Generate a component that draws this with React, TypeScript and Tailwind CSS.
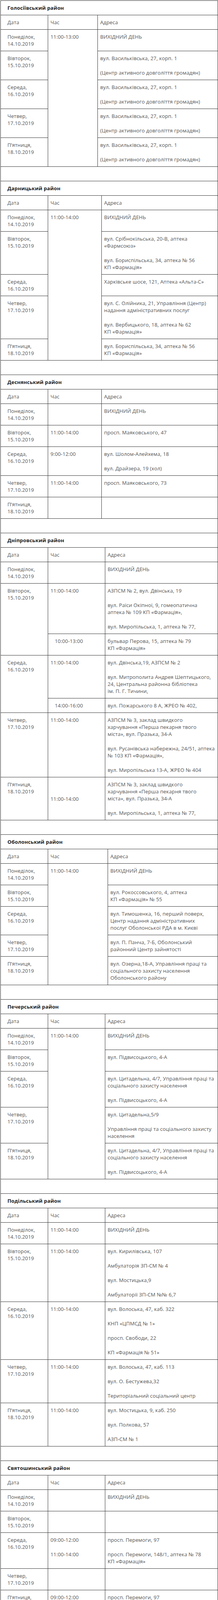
import React from "react";

const DAYS = [
  "Понеділок,\n14.10.2019",
  "Вівторок,\n15.10.2019",
  "Середа,\n16.10.2019",
  "Четвер,\n17.10.2019",
  "П’ятниця,\n18.10.2019",
];

type C = { t: string; span?: string; wide?: boolean; mid?: boolean };
type District = { name: string; cols: string; rowsCls: string; blank: boolean; rows: C[][] };

const d = (i: number, span?: string): C => ({ t: DAYS[i], wide: true, span });

const VAS = "вул. Васильківська, 27, корп. 1\n\n(Центр активного довголіття громадян)";
const CIT =
  "вул. Цитадельна, 4/7, Управління праці та\nсоціального захисту населення\n\nвул. Підвисоцького, 4-А";
const PER = "просп. Перемоги, 97\n\nпросп. Перемоги, 148/1, аптека № 78\nКП «Фармація»";
const T14 = "11:00-14:00";
const T10 = "10:00-13:00";
const OFF = "ВИХІДНИЙ ДЕНЬ";

const DISTRICTS: District[] = [
  {
    name: "Голосіївський район",
    cols: "grid-cols-[121px_127px_1fr]",
    rowsCls: "grid-rows-[37px_37px_55px_74px_74px_74px_74px_37px]",
    blank: true,
    rows: [
      [d(0), { t: "11:00-13:00", span: "row-span-5" }, { t: OFF }],
      [d(1), { t: VAS }],
      [d(2), { t: VAS }],
      [d(3), { t: VAS }],
      [d(4), { t: VAS }],
    ],
  },
  {
    name: "Дарницький район",
    cols: "grid-cols-[121px_137px_1fr]",
    rowsCls: "grid-rows-[37px_37px_55px_110px_55px_110px_55px_37px]",
    blank: true,
    rows: [
      [d(0), { t: T14, span: "row-span-5" }, { t: OFF }],
      [
        d(1),
        {
          t: "вул. Срібнокільська, 20-В, аптека\n«Фармсоюз»\n\nвул. Бориспільська, 34, аптека № 56\nКП «Фармація»",
        },
      ],
      [d(2), { t: "Харківське шосе, 121, Аптека «Альта-С»" }],
      [
        d(3),
        {
          t: "вул. С. Олійника, 21, Управління (Центр)\nнадання адміністративних послуг\n\nвул. Вербицького, 18, аптека № 62\nКП «Фармація»",
        },
      ],
      [d(4), { t: "вул. Бориспільська, 34, аптека № 56\nКП «Фармація»" }],
    ],
  },
  {
    name: "Деснянський район",
    cols: "grid-cols-[121px_137px_1fr]",
    rowsCls: "grid-rows-[37px_37px_55px_55px_74px_55px_55px_37px]",
    blank: true,
    rows: [
      [d(0), { t: "" }, { t: OFF }],
      [d(1), { t: T14 }, { t: "просп. Маяковського, 47" }],
      [d(2), { t: "9:00-12:00" }, { t: "вул. Шолом-Алейхема, 18\n\nвул. Драйзера, 19 (хол)" }],
      [d(3), { t: T14 }, { t: "просп. Маяковського, 73" }],
      [d(4), { t: "" }, { t: "" }],
    ],
  },
  {
    name: "Дніпровський район",
    cols: "grid-cols-[121px_146px_1fr]",
    rowsCls: "grid-rows-[37px_37px_55px_129px_55px_110px_37px_165px_110px_37px]",
    blank: true,
    rows: [
      [d(0), { t: "" }, { t: OFF }],
      [
        d(1, "row-span-2"),
        { t: T14 },
        {
          t: "АЗПСМ № 2, вул. Двінська, 19\n\nвул. Раїси Окіпної, 9, гомеопатична\nаптека № 109 КП «Фармація»,\n\nвул. Миропільська, 1, аптека № 77,",
        },
      ],
      [{ t: "10:00-13:00", wide: true }, { t: "бульвар Перова, 15, аптека № 79\nКП «Фармація»" }],
      [
        d(2, "row-span-2"),
        { t: T14 },
        {
          t: "вул. Двінська,19, АЗПСМ № 2\n\nвул. Митрополита Андрея Шептицького,\n24, Центральна районна бібліотека\nім. П. Г. Тичини,",
        },
      ],
      [{ t: "14:00-16:00", wide: true }, { t: "вул. Пожарського 8 А, ЖРЕО № 402," }],
      [
        d(3),
        { t: T14 },
        {
          t: "АЗПСМ № 3, заклад швидкого\nхарчування «Перша пекарня твого\nміста», вул. Празька, 34-А\n\nвул. Русанівська набережна, 24/51, аптека\n№ 103 КП «Фармація»,\n\nвул. Миропільська 13-А, ЖРЕО № 404",
        },
      ],
      [
        d(4),
        { t: T14, mid: true },
        {
          t: "АЗПСМ № 3, заклад швидкого\nхарчування «Перша пекарня твого\nміста», вул. Празька, 34-А\n\nвул. Миропільська, 1, аптека № 77,",
        },
      ],
    ],
  },
  {
    name: "Оболонський район",
    cols: "grid-cols-[121px_153px_1fr]",
    rowsCls: "grid-rows-[37px_37px_55px_55px_73px_55px_73px_37px]",
    blank: true,
    rows: [
      [d(0), { t: T14, span: "row-span-5" }, { t: OFF }],
      [d(1), { t: "вул. Рокоссовського, 4, аптека\nКП «Фармація» № 55" }],
      [
        d(2),
        {
          t: "вул. Тимошенка, 16, перший поверх,\nЦентр надання адміністративних\nпослуг Оболонської РДА в м. Києві",
        },
      ],
      [d(3), { t: "вул. П. Панча, 7-Б, Оболонський\nрайонний Центр зайнятості" }],
      [
        d(4),
        {
          t: "вул. Озерна,18-А, Управління праці та\nсоціального захисту населення\nОболонського району",
        },
      ],
    ],
  },
  {
    name: "Печерський район",
    cols: "grid-cols-[121px_146px_1fr]",
    rowsCls: "grid-rows-[37px_37px_55px_55px_92px_92px_92px_37px]",
    blank: true,
    rows: [
      [d(0), { t: T14, span: "row-span-5" }, { t: OFF }],
      [d(1), { t: "вул. Підвисоцького, 4-А" }],
      [d(2), { t: CIT }],
      [d(3), { t: "вул. Цитадельна,5/9\n\nУправління праці та соціального захисту\nнаселення" }],
      [d(4), { t: CIT }],
    ],
  },
  {
    name: "Подільський район",
    cols: "grid-cols-[121px_146px_1fr]",
    rowsCls: "grid-rows-[37px_37px_55px_148px_148px_111px_111px_37px]",
    blank: true,
    rows: [
      [d(0), { t: T14 }, { t: OFF }],
      [
        d(1),
        { t: T14 },
        { t: "вул. Кирилівська, 107\n\nАмбулаторія ЗП-СМ № 4\n\nвул. Мостицька,9\n\nАмбулаторії ЗП-СМ №№ 6,7" },
      ],
      [
        d(2),
        { t: T14 },
        { t: "вул. Волоська, 47, каб. 322\n\nКНП «ЦПМСД № 1»\n\nпросп. Свободи, 22\n\nКП «Фармація № 51»" },
      ],
      [
        d(3),
        { t: T14 },
        { t: "вул. Волоська, 47, каб. 113\n\nвул. О. Бестужева,32\n\nТериторіальний соціальний центр" },
      ],
      [d(4), { t: T14 }, { t: "вул. Мостицька, 9, каб. 250\n\nвул. Полкова, 57\n\nАЗП-СМ № 1" }],
    ],
  },
  {
    name: "Святошинський район",
    cols: "grid-cols-[121px_146px_1fr]",
    rowsCls: "grid-rows-[37px_37px_55px_55px_92px_55px_92px]",
    blank: false,
    rows: [
      [d(0), { t: "" }, { t: OFF }],
      [d(1), { t: "" }, { t: "" }],
      [d(2), { t: "09:00-12:00\n\n11:00-14:00" }, { t: PER }],
      [d(3), { t: "" }, { t: "" }],
      [d(4), { t: "09:00-12:00\n\n11:00-14:00" }, { t: PER }],
    ],
  },
  {
    name: "Солом’янський район",
    cols: "grid-cols-[121px_153px_1fr]",
    rowsCls: "grid-rows-[37px_37px_55px_164px_74px_74px_73px]",
    blank: false,
    rows: [
      [d(0), { t: "" }, { t: OFF }],
      [
        d(1),
        { t: T14, span: "row-span-4" },
        {
          t: "просп. Повітрофлотський, 40,\nУправління праці та соціального\nзахисту Солом’янської районної в місті\nКиєві державної адміністрації:\n\nвул. Гавела, 83-А, Територіальний центр\nсоціального обслуговування\nСолом’янського району",
        },
      ],
      [d(2), { t: "вул. Липківського, 27/5, аптека КП № 17,\n\nпросп. Перемоги, 45, аптека КП № 36" }],
      [d(3), { t: "вул. Солом’янська, 17\n\nпросп. Комарова, 3, Медмістечко" }],
      [
        d(4),
        {
          t: "просп. Повітрофлотський, 41,\nСолом’янська районна в місті Києві\nдержавна адміністрація",
        },
      ],
    ],
  },
  {
    name: "Шевченківський район",
    cols: "grid-cols-[121px_153px_1fr]",
    rowsCls: "grid-rows-[37px_37px_55px_110px_92px_110px_92px]",
    blank: false,
    rows: [
      [d(0), { t: T10 }, { t: OFF }],
      [
        d(1),
        { t: T10 },
        {
          t: "вул. Б. Хмельницького, 24\n\n(Шевченківська районна в місті Києві\nдержавна адміністрація), КНП ЦПМСД\n№ 1",
        },
      ],
      [d(2), { t: T10 }, { t: "вул. Січових Стрільців, 10, аптека № 7 КП\n«Фармація»\n\nКНП ЦПМСД № 2" }],
      [
        d(3),
        { t: T10 },
        {
          t: "вул. Б. Хмельницького, 24\n\n(Шевченківська районна в місті Києві\nдержавна адміністрація), КНП ЦПМСД\n№ 3",
        },
      ],
      [d(4), { t: T10 }, { t: "вул. Ісаакяна, 2 (аптека № 90\nКП «Фармація)\n\nКНП ЦПМСД № 1" }],
    ],
  },
];

function Text({ t }: { t: string }) {
  if (!t) return null;
  const paras = t.split("\n\n");
  return (
    <div className="flex flex-col gap-[19px]">
      {paras.map((p, pi) => (
        <div key={pi} className="whitespace-nowrap">
          {p.split("\n").map((l, li) => (
            <React.Fragment key={li}>
              {li > 0 && <br />}
              {l}
            </React.Fragment>
          ))}
        </div>
      ))}
    </div>
  );
}

function Cell({ c }: { c: C }) {
  return (
    <div
      className={`border-r border-b border-[#333] pr-[6px] ${c.wide ? "pl-[17px]" : "pl-[6px]"} ${
        c.mid ? "flex items-center" : "pt-[9px]"
      } ${c.span ?? ""}`}
    >
      <Text t={c.t} />
    </div>
  );
}

function DistrictGrid({ dist, first }: { dist: District; first: boolean }) {
  return (
    <div
      className={`grid w-[556px] ml-px border-l border-[#333] ${dist.cols} ${dist.rowsCls} ${
        first ? "border-t mt-px" : ""
      }`}
    >
      <div className="col-span-3 border-r border-b border-[#333] pt-[9px] pl-[17px] font-bold text-[#222] whitespace-nowrap">
        {dist.name}
      </div>
      <Cell c={{ t: "Дата", wide: true }} />
      <Cell c={{ t: "Час" }} />
      <Cell c={{ t: "Адреса" }} />
      {dist.rows.map((row, ri) => (
        <React.Fragment key={ri}>
          {row.map((c, ci) => (
            <Cell key={ci} c={c} />
          ))}
        </React.Fragment>
      ))}
      {dist.blank && <div className="col-span-3 border-r border-b border-[#333]" />}
    </div>
  );
}

export default function App() {
  return (
    <div className="bg-white w-[557px] text-[13px] leading-[18px] tracking-[0.15px] text-[#555] font-[family-name:Open_Sans,sans-serif]">
      {DISTRICTS.map((dist, i) => (
        <DistrictGrid key={dist.name} dist={dist} first={i === 0} />
      ))}
    </div>
  );
}
